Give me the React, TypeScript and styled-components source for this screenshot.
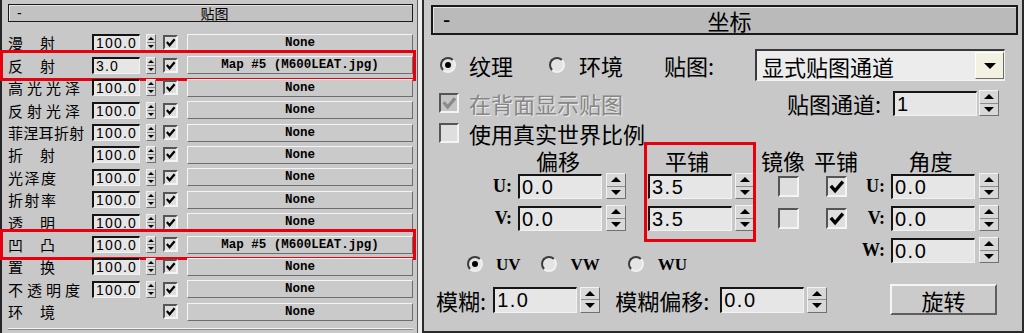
import React from "react";
import styled, { createGlobalStyle } from "styled-components";

type MapRow = {
  label: string;
  ls: number;
  value?: string;
  map: string;
  marked?: boolean;
};

const MAP = "Map #5 (M600LEAT.jpg)";

const rows: MapRow[] = [
  { label: "漫　射", ls: 1, value: "100.0", map: "None" },
  { label: "反　射", ls: 1, value: "3.0", map: MAP, marked: true },
  { label: "高光光泽", ls: 4, value: "100.0", map: "None" },
  { label: "反射光泽", ls: 4, value: "100.0", map: "None" },
  { label: "菲涅耳折射", ls: 0.3, value: "100.0", map: "None" },
  { label: "折　射", ls: 1, value: "100.0", map: "None" },
  { label: "光泽度", ls: 1.5, value: "100.0", map: "None" },
  { label: "折射率", ls: 1.5, value: "100.0", map: "None" },
  { label: "透　明", ls: 1, value: "100.0", map: "None" },
  { label: "凹　凸", ls: 1, value: "100.0", map: MAP, marked: true },
  { label: "置　换", ls: 1, value: "100.0", map: "None" },
  { label: "不透明度", ls: 4, value: "100.0", map: "None" },
  { label: "环　境", ls: 1, map: "None" },
];

const CJK = `"Noto Sans CJK SC", "Liberation Sans", sans-serif`;

const GlobalStyle = createGlobalStyle`
  html, body {
    margin: 0;
    padding: 0;
    background: #c8c8c8;
  }
  body {
    font-family: ${CJK};
    color: #000;
  }
`;

const Screen = styled.div`
  display: flex;
  width: 1024px;
  height: 333px;
  overflow: hidden;
  background: #c8c8c8;
`;

/* ---------- shared win32 bits ---------- */

const Spinner = styled.div<{ $w: number; $h: number }>`
  box-sizing: border-box;
  width: ${(p) => p.$w}px;
  height: ${(p) => p.$h}px;
  flex: none;
  display: flex;
  flex-direction: column;
  background: #d8d8d8;
  border: 1px solid;
  border-color: #f2f2f2 #707070 #707070 #f2f2f2;
`;

const SpinArrow = styled.div<{ $down?: boolean; $s: number }>`
  flex: 1;
  display: flex;
  align-items: center;
  justify-content: center;
  & + & {
    border-top: 1px solid #8c8c8c;
  }
  &::before {
    content: "";
    border-left: ${(p) => p.$s}px solid transparent;
    border-right: ${(p) => p.$s}px solid transparent;
    ${(p) => (p.$down ? "border-top" : "border-bottom")}: ${(p) => p.$s}px solid #000;
  }
`;

const Spin = ({ w, h, s }: { w: number; h: number; s: number }) => (
  <Spinner $w={w} $h={h}>
    <SpinArrow $s={s} />
    <SpinArrow $s={s} $down />
  </Spinner>
);

const CheckBox = styled.span<{ $size: number; $off?: boolean }>`
  box-sizing: border-box;
  width: ${(p) => p.$size}px;
  height: ${(p) => p.$size}px;
  flex: none;
  display: inline-flex;
  align-items: center;
  justify-content: center;
  border: 2px solid;
  border-color: #555 #f4f4f4 #f4f4f4 #555;
  background: ${(p) => (p.$off ? "#c4c4c4" : "#dedede")};
`;

const Check = ({ size, on, off }: { size: number; on?: boolean; off?: boolean }) => (
  <CheckBox $size={size} $off={off}>
    {on && (
      <svg width={size - 4} height={size - 4} viewBox="0 0 12 12">
        <polyline
          points="2,5.5 5,9 10.5,2.5"
          fill="none"
          stroke={off ? "#8a8a8a" : "#000"}
          strokeWidth="2.4"
        />
      </svg>
    )}
  </CheckBox>
);

const Radio = styled.span<{ $on?: boolean }>`
  box-sizing: border-box;
  width: 16px;
  height: 16px;
  flex: none;
  border-radius: 50%;
  border: 2px solid;
  border-color: #3c3c3c #f0f0f0 #f0f0f0 #3c3c3c;
  background: #e4e4e4;
  display: inline-flex;
  align-items: center;
  justify-content: center;
  &::after {
    content: "";
    width: 6px;
    height: 6px;
    border-radius: 50%;
    background: ${(p) => (p.$on ? "#000" : "transparent")};
  }
`;

const Field = styled.div<{ $w: number; $h: number; $fs: number }>`
  box-sizing: border-box;
  width: ${(p) => p.$w}px;
  height: ${(p) => p.$h}px;
  flex: none;
  display: flex;
  align-items: center;
  padding-left: 2px;
  background: #e6e6e6;
  border-style: solid;
  border-width: 2px 1px 1px 2px;
  border-color: #151515 #f2f2f2 #f2f2f2 #151515;
  font-family: "Liberation Sans", sans-serif;
  font-size: ${(p) => p.$fs}px;
  letter-spacing: ${(p) => (p.$fs > 16 ? 1.5 : 1.2)}px;
  line-height: 1;
`;

/* ---------- left rollout: maps ---------- */

const LeftPanel = styled.div`
  box-sizing: border-box;
  width: 418px;
  flex: none;
  padding: 4px 4px 0 6px;
  border-left: 2px solid #262626;
  border-right: 1px solid #5c5c5c;
`;

const RollHeader = styled.div<{ $big?: boolean }>`
  box-sizing: border-box;
  height: ${(p) => (p.$big ? 30 : 18)}px;
  display: grid;
  grid-template-columns: 1fr auto 1fr;
  align-items: center;
  padding-left: ${(p) => (p.$big ? 10 : 8)}px;
  background: ${(p) => (p.$big ? "#bababa" : "#c2c2c2")};
  border: ${(p) => (p.$big ? 2 : 1)}px solid #1a1a1a;
  box-shadow: inset 1px 1px 0 #e4e4e4;
  font-size: ${(p) => (p.$big ? 22 : 14)}px;
  line-height: 1;
`;

const Minus = styled.span`
  justify-self: start;
  font-family: "Liberation Sans", sans-serif;
`;

const MapList = styled.div`
  margin-top: 9.8px;
  padding-bottom: 5px;
  border-bottom: 1px solid #f2f2f2;
  box-shadow: 0 1px 0 #8a8a8a;
`;

const MapLine = styled.div<{ $marked?: boolean }>`
  position: relative;
  height: 22.4px;
  display: grid;
  grid-template-columns: 84px 54px 17px 24px 1fr;
  align-items: center;
  &::after {
    content: "";
    display: ${(p) => (p.$marked ? "block" : "none")};
    position: absolute;
    inset: -4px -3px -4px -8px;
    border: 3px solid #e8000e;
    pointer-events: none;
  }
`;

const MapLabel = styled.span<{ $ls: number }>`
  grid-column: 1;
  font-size: 15px;
  letter-spacing: ${(p) => p.$ls}px;
  white-space: nowrap;
  line-height: 1;
`;

const Cell = styled.div<{ $col: number }>`
  grid-column: ${(p) => p.$col};
  display: flex;
  align-items: center;
`;

const MapButton = styled.div`
  grid-column: 5;
  box-sizing: border-box;
  height: 18px;
  display: flex;
  align-items: center;
  justify-content: center;
  background: #cacaca;
  border: 1px solid;
  border-color: #f4f4f4 #6e6e6e #6e6e6e #f4f4f4;
  font-family: "Liberation Mono", monospace;
  font-weight: bold;
  font-size: 12.5px;
  white-space: pre;
`;

const Seam = styled.div`
  width: 4px;
  flex: none;
  background: #ececec;
`;

/* ---------- right rollout: coordinates ---------- */

const RightPanel = styled.div`
  box-sizing: border-box;
  flex: 1;
  padding: 5px 4px 0 7px;
  border: 2px solid #2a2a2a;
  border-top: none;
  font-size: 22px;
`;

const Line = styled.div<{ $h: number; $mt: number }>`
  height: ${(p) => p.$h}px;
  margin-top: ${(p) => p.$mt}px;
  display: flex;
  align-items: center;
`;

const Text = styled.span<{ $ml?: number; $dim?: boolean }>`
  margin-left: ${(p) => p.$ml ?? 0}px;
  white-space: nowrap;
  line-height: 1;
  color: ${(p) => (p.$dim ? "#868686" : "#000")};
  text-shadow: ${(p) => (p.$dim ? "1px 1px 0 #ececec" : "none")};
`;

const Gap = styled.span<{ $w: number }>`
  width: ${(p) => p.$w}px;
  flex: none;
`;

const Push = styled.span`
  flex: 1;
`;

const Dropdown = styled.div`
  box-sizing: border-box;
  width: 250px;
  height: 32px;
  margin-right: 13px;
  display: flex;
  align-items: center;
  padding-left: 5px;
  background: #ececec;
  border-style: solid;
  border-width: 2px 1px 1px 2px;
  border-color: #3a3a3a #f4f4f4 #f4f4f4 #3a3a3a;
`;

const DropArrow = styled.div`
  box-sizing: border-box;
  width: 29px;
  height: 27px;
  margin-left: auto;
  display: flex;
  align-items: center;
  justify-content: center;
  background: #f3f1e2;
  border: 1px solid;
  border-color: #ffffff #6a6a6a #6a6a6a #ffffff;
  &::before {
    content: "";
    border-left: 6px solid transparent;
    border-right: 6px solid transparent;
    border-top: 6px solid #000;
  }
`;

const CoordGrid = styled.div`
  margin-top: 4px;
  margin-left: 34px;
  display: grid;
  grid-template-columns: 53px 108px 22px 108px 54px 52px 29px 108px;
  grid-template-rows: 22px 32px 32px 32px 8px;
  align-items: center;
`;

const ColHead = styled.div<{ $col: string }>`
  grid-column: ${(p) => p.$col};
  grid-row: 1;
  align-self: end;
  text-align: center;
  line-height: 20px;
`;

const ColHeadLeft = styled(ColHead)`
  text-align: left;
  padding-left: 18px;
`;

const Axis = styled.div<{ $col: number; $row: number }>`
  grid-column: ${(p) => p.$col};
  grid-row: ${(p) => p.$row};
  text-align: right;
  padding-right: 6px;
  font-family: "Liberation Serif", serif;
  font-weight: bold;
  font-size: 18px;
`;

const SpinBox = styled.div<{ $col: number; $row: number }>`
  grid-column: ${(p) => p.$col};
  grid-row: ${(p) => p.$row};
  display: flex;
  align-items: center;
  gap: 4px;
`;

const TileBox = styled.div`
  grid-column: 4;
  grid-row: 1 / 4;
  align-self: stretch;
  position: relative;
  display: grid;
  grid-template-rows: 22px 32px 32px;
  align-items: center;
  &::after {
    content: "";
    position: absolute;
    inset: -6px 0 -8px -4px;
    border: 3px solid #e8000e;
    pointer-events: none;
  }
`;

const TileHead = styled.div`
  align-self: end;
  padding-left: 17px;
  line-height: 20px;
`;

const TileRow = styled.div`
  display: flex;
  align-items: center;
  gap: 3px;
`;

const CheckCell = styled.div<{ $col: number; $row: number; $shift: number }>`
  grid-column: ${(p) => p.$col};
  grid-row: ${(p) => p.$row};
  display: flex;
  justify-content: center;
  padding-left: ${(p) => p.$shift}px;
`;

const UvRow = styled.div`
  grid-column: 1 / 5;
  grid-row: 4 / 6;
  align-self: end;
  height: 20px;
  display: flex;
  align-items: center;
  padding-left: 2px;
  font-family: "Liberation Serif", serif;
  font-weight: bold;
  font-size: 17px;
`;

const PushButton = styled.div`
  box-sizing: border-box;
  width: 107px;
  height: 31px;
  margin-left: auto;
  margin-right: 21px;
  display: flex;
  align-items: center;
  justify-content: center;
  background: #cbcbcb;
  border: 2px solid;
  border-color: #f6f6f6 #5e5e5e #5e5e5e #f6f6f6;
  line-height: 1;
`;

const BigField = ({ v }: { v: string }) => (
  <Field $w={84} $h={25} $fs={20}>
    {v}
  </Field>
);

const BigSpin = () => <Spin w={20} h={26} s={5} />;

export default function App() {
  return (
    <>
      <GlobalStyle />
      <Screen>
        <LeftPanel>
          <RollHeader>
            <Minus>-</Minus>
            <span>贴图</span>
          </RollHeader>
          <MapList>
            {rows.map((r) => (
              <MapLine key={r.label} $marked={r.marked}>
                <MapLabel $ls={r.ls}>{r.label}</MapLabel>
                {r.value && (
                  <>
                    <Cell $col={2}>
                      <Field $w={48} $h={17} $fs={14}>
                        {r.value}
                      </Field>
                    </Cell>
                    <Cell $col={3}>
                      <Spin w={10} h={17} s={3} />
                    </Cell>
                  </>
                )}
                <Cell $col={4}>
                  <Check size={15} on />
                </Cell>
                <MapButton>{r.map}</MapButton>
              </MapLine>
            ))}
          </MapList>
        </LeftPanel>

        <Seam />

        <RightPanel>
          <RollHeader $big>
            <Minus>-</Minus>
            <span>坐标</span>
          </RollHeader>

          <Line $h={36} $mt={12}>
            <Gap $w={9} />
            <Radio $on />
            <Text $ml={13}>纹理</Text>
            <Gap $w={36} />
            <Radio />
            <Text $ml={14}>环境</Text>
            <Text $ml={41}>贴图:</Text>
            <Push />
            <Dropdown>
              显式贴图通道
              <DropArrow />
            </Dropdown>
          </Line>

          <Line $h={26} $mt={7}>
            <Gap $w={8} />
            <Check size={20} on off />
            <Text $ml={10} $dim>
              在背面显示贴图
            </Text>
            <Push />
            <Text>贴图通道:</Text>
            <Gap $w={12} />
            <Field $w={84} $h={25} $fs={20}>
              1
            </Field>
            <Gap $w={2} />
            <BigSpin />
            <Gap $w={19} />
          </Line>

          <Line $h={22} $mt={6}>
            <Gap $w={8} />
            <Check size={20} />
            <Text $ml={10}>使用真实世界比例</Text>
          </Line>

          <CoordGrid>
            <ColHeadLeft $col="2">偏移</ColHeadLeft>
            <ColHead $col="5">镜像</ColHead>
            <ColHead $col="6">平铺</ColHead>
            <ColHead $col="7 / 9">角度</ColHead>

            <Axis $col={1} $row={2}>U:</Axis>
            <Axis $col={1} $row={3}>V:</Axis>
            <SpinBox $col={2} $row={2}>
              <BigField v="0.0" />
              <BigSpin />
            </SpinBox>
            <SpinBox $col={2} $row={3}>
              <BigField v="0.0" />
              <BigSpin />
            </SpinBox>

            <TileBox>
              <TileHead>平铺</TileHead>
              <TileRow>
                <BigField v="3.5" />
                <BigSpin />
              </TileRow>
              <TileRow>
                <BigField v="3.5" />
                <BigSpin />
              </TileRow>
            </TileBox>

            <CheckCell $col={5} $row={2} $shift={10}>
              <Check size={21} />
            </CheckCell>
            <CheckCell $col={5} $row={3} $shift={10}>
              <Check size={21} />
            </CheckCell>
            <CheckCell $col={6} $row={2} $shift={-8}>
              <Check size={21} on />
            </CheckCell>
            <CheckCell $col={6} $row={3} $shift={-8}>
              <Check size={21} on />
            </CheckCell>

            <Axis $col={7} $row={2}>U:</Axis>
            <Axis $col={7} $row={3}>V:</Axis>
            <Axis $col={7} $row={4}>W:</Axis>
            <SpinBox $col={8} $row={2}>
              <BigField v="0.0" />
              <BigSpin />
            </SpinBox>
            <SpinBox $col={8} $row={3}>
              <BigField v="0.0" />
              <BigSpin />
            </SpinBox>
            <SpinBox $col={8} $row={4}>
              <BigField v="0.0" />
              <BigSpin />
            </SpinBox>

            <UvRow>
              <Radio $on />
              <Text $ml={13}>UV</Text>
              <Gap $w={20} />
              <Radio />
              <Text $ml={14}>VW</Text>
              <Gap $w={28} />
              <Radio />
              <Text $ml={14}>WU</Text>
            </UvRow>
          </CoordGrid>

          <Line $h={31} $mt={10}>
            <Text $ml={5}>模糊:</Text>
            <Gap $w={7} />
            <Field $w={84} $h={26} $fs={20}>
              1.0
            </Field>
            <Gap $w={3} />
            <BigSpin />
            <Text $ml={15}>模糊偏移:</Text>
            <Gap $w={11} />
            <Field $w={84} $h={26} $fs={20}>
              0.0
            </Field>
            <Gap $w={3} />
            <BigSpin />
            <PushButton>旋转</PushButton>
          </Line>
        </RightPanel>
      </Screen>
    </>
  );
}
